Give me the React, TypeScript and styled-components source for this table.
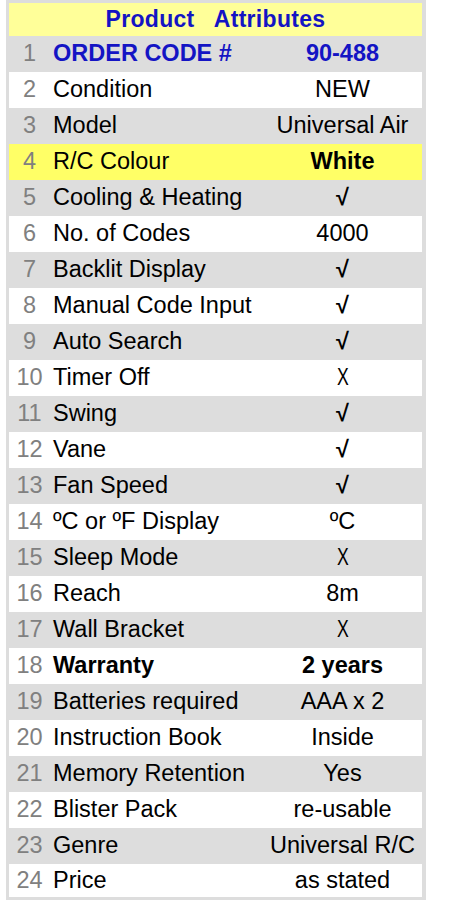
import styled, { createGlobalStyle } from 'styled-components'

const GlobalStyle = createGlobalStyle`
  html, body {
    margin: 0;
    padding: 0;
    background: #fff;
  }
  body {
    font-family: "Liberation Sans", Arial, sans-serif;
  }
`

const Frame = styled.div`
  width: 413px;
  margin-left: 6px;
  padding: 3px 4px 3px 3px;
  background-color: #dddddd;
`

const Header = styled.div`
  height: 33px;
  display: flex;
  align-items: center;
  justify-content: center;
  background-color: #ffff99;
  color: #1414c4;
  font-size: 23px;
  font-weight: bold;
  letter-spacing: 0.3px;
  white-space: pre;
`

type Tone = 'gray' | 'white' | 'yellow'

const toneColor: Record<Tone, string> = {
  gray: '#dddddd',
  white: '#ffffff',
  yellow: '#ffff66',
}

const Row = styled.div<{ $tone: Tone; $last?: boolean }>`
  display: grid;
  grid-template-columns: 41px 213px 1fr;
  align-items: center;
  height: ${(p) => (p.$last ? '33px' : '36px')};
  background-color: ${(p) => toneColor[p.$tone]};
  font-size: 23.5px;
  line-height: 1;
  color: #000;
`

const Num = styled.span`
  text-align: center;
  color: #808080;
`

const Label = styled.span<{ $strong?: boolean; $blue?: boolean }>`
  padding-left: 3px;
  white-space: nowrap;
  font-weight: ${(p) => (p.$strong ? 'bold' : 'normal')};
  color: ${(p) => (p.$blue ? '#1414c4' : '#000')};
`

const Value = styled.span<{ $strong?: boolean; $blue?: boolean }>`
  text-align: center;
  white-space: nowrap;
  font-weight: ${(p) => (p.$strong ? 'bold' : 'normal')};
  color: ${(p) => (p.$blue ? '#1414c4' : '#000')};
`

const Cross = styled.span`
  display: inline-block;
  transform: scaleX(0.75);
`

const Tick = styled.span`
  font-weight: bold;
`

type Attr = {
  label: string
  value: React.ReactNode
  strong?: boolean
  blue?: boolean
  highlight?: boolean
}

const yes = <Tick>√</Tick>
const no = <Cross>X</Cross>

const attributes: Attr[] = [
  { label: 'ORDER CODE #', value: '90-488', strong: true, blue: true },
  { label: 'Condition', value: 'NEW' },
  { label: 'Model', value: 'Universal Air' },
  { label: 'R/C Colour', value: <b>White</b>, highlight: true },
  { label: 'Cooling & Heating', value: yes },
  { label: 'No. of Codes', value: '4000' },
  { label: 'Backlit Display', value: yes },
  { label: 'Manual Code Input', value: yes },
  { label: 'Auto Search', value: yes },
  { label: 'Timer Off', value: no },
  { label: 'Swing', value: yes },
  { label: 'Vane', value: yes },
  { label: 'Fan Speed', value: yes },
  { label: 'ºC or ºF Display', value: 'ºC' },
  { label: 'Sleep Mode', value: no },
  { label: 'Reach', value: '8m' },
  { label: 'Wall Bracket', value: no },
  { label: 'Warranty', value: '2 years', strong: true },
  { label: 'Batteries required', value: 'AAA x 2' },
  { label: 'Instruction Book', value: 'Inside' },
  { label: 'Memory Retention', value: 'Yes' },
  { label: 'Blister Pack', value: 're-usable' },
  { label: 'Genre', value: 'Universal R/C' },
  { label: 'Price', value: 'as stated' },
]

export default function App(): JSX.Element {
  return (
    <>
      <GlobalStyle />
      <Frame>
        <Header>{'Product   Attributes'}</Header>
        {attributes.map((a, i) => {
          const n = i + 1
          const tone: Tone = a.highlight ? 'yellow' : n % 2 === 1 ? 'gray' : 'white'
          return (
            <Row key={n} $tone={tone} $last={n === attributes.length}>
              <Num>{n}</Num>
              <Label $strong={a.strong} $blue={a.blue}>{a.label}</Label>
              <Value $strong={a.strong} $blue={a.blue}>{a.value}</Value>
            </Row>
          )
        })}
      </Frame>
    </>
  )
}
